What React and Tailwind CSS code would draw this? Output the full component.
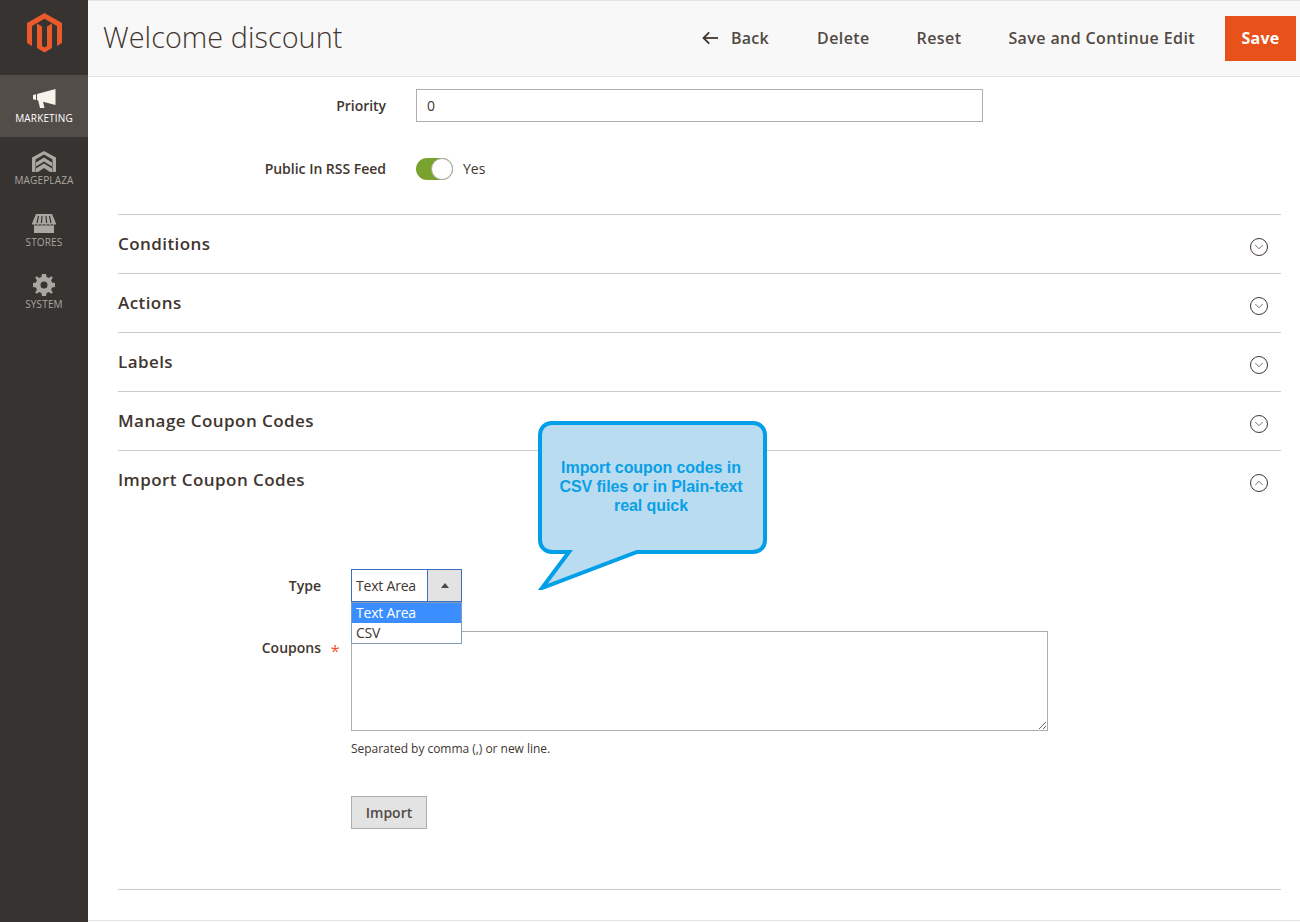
import React from 'react';
import { ChevronDown, ChevronUp } from 'lucide-react';

const LogoIcon = () => (
    <svg width="35" height="40" viewBox="0 0 35 40" fill="#eb5a2a">
        <path d="M17.5 0L35 10V30L30 33V13L17.5 5.8L5 13V33L0 30V10Z" />
        <path d="M10 10.5L15 13.4V33L17.5 34.5L20 33V13.4L25 10.5V35L17.5 39.5L10 35Z" />
    </svg>
);

const MegaphoneIcon = ({ color }) => (
    <svg width="23" height="20" viewBox="0 0 23 20" fill={color}>
        <path d="M0 6L3 5.2V11L0 10.2Z" />
        <path d="M4 5L22.5 0V16L10 12.8L11.5 19H7L5.2 11.6L4 11.2Z" />
    </svg>
);

const PlazaIcon = ({ color }) => (
    <svg width="24" height="21" viewBox="0 0 24 21" fill={color}>
        <path d="M12 0L24 6.5V21H20.5V8.5L12 3.5L3.5 8.5V21H0V6.5Z" />
        <path d="M12 6.5L20 11.5V15.5L12 10.5L4 15.5V11.5Z" />
        <path d="M12 12.5L20 17.5V21H18L12 17L6 21H4V17.5Z" />
    </svg>
);

const StoreIcon = ({ color }) => (
    <svg width="24" height="19" viewBox="0 0 24 19" fill={color}>
        <path d="M4 0H20L24 9.5C24 10.3 23 10.8 22 10.8C21 10.8 20 10.3 20 9.5C20 10.3 19 10.8 18 10.8C17 10.8 16 10.3 16 9.5C16 10.3 15 10.8 14 10.8C13 10.8 12 10.3 12 9.5C12 10.3 11 10.8 10 10.8C9 10.8 8 10.3 8 9.5C8 10.3 7 10.8 6 10.8C5 10.8 4 10.3 4 9.5C4 10.3 3 10.8 2 10.8C1 10.8 0 10.3 0 9.5Z" />
        <path d="M2 11.4H22V19H2Z" />
        <path d="M6.5 2L5 9M10 2L9.4 9M14 2L14.6 9M17.5 2L19 9" stroke="#373330" strokeWidth="1.2" fill="none" />
    </svg>
);

const GearIcon = ({ color }) => (
    <svg width="22" height="22" viewBox="0 0 22 22" fill={color}>
        <path fillRule="evenodd" d="M9 0H13L13.6 3L15.8 3.9L18.4 2.2L19.8 3.6L18.1 6.2L19 8.4L22 9V13L19 13.6L18.1 15.8L19.8 18.4L18.4 19.8L15.8 18.1L13.6 19L13 22H9L8.4 19L6.2 18.1L3.6 19.8L2.2 18.4L3.9 15.8L3 13.6L0 13V9L3 8.4L3.9 6.2L2.2 3.6L3.6 2.2L6.2 3.9L8.4 3ZM11 7.5A3.5 3.5 0 1 0 11 14.5A3.5 3.5 0 1 0 11 7.5Z" />
    </svg>
);

const BackArrow = () => (
    <svg width="16" height="14" viewBox="0 0 16 14" fill="none" stroke="#41362f" strokeWidth="1.8" className="mr-[13px]">
        <path d="M1.5 7H16" />
        <path d="M7.2 1.3L1.5 7L7.2 12.7" />
    </svg>
);

const navItems = [
    { label: 'Marketing', icon: MegaphoneIcon, active: true },
    { label: 'Mageplaza', icon: PlazaIcon },
    { label: 'Stores', icon: StoreIcon },
    { label: 'System', icon: GearIcon },
];

const sections = ['Conditions', 'Actions', 'Labels', 'Manage Coupon Codes'];

const SectionRow = ({ title, open }) => (
    <div className="h-[59px] border-t border-[#cccccc] flex items-center justify-between">
        <h2 className="text-[17px] font-semibold tracking-[0.43px] text-[#41362f] -mt-[1px]">{title}</h2>
        <span className="w-[18px] h-[18px] mr-[13px] mt-[5px] rounded-full border border-[#41362f] flex items-center justify-center text-[#41362f]">
            {open ? <ChevronUp size={14} strokeWidth={1.2} /> : <ChevronDown size={14} strokeWidth={1.2} />}
        </span>
    </div>
);

export default function App() {
    return (
        <div className="flex w-[1300px] h-[922px] overflow-hidden bg-white text-[#41362f] font-['Open_Sans',sans-serif]">
            <aside className="w-[88px] shrink-0 bg-[#373330]">
                <div className="h-[75px] flex justify-center pt-[13px]">
                    <LogoIcon />
                </div>
                {navItems.map(({ label, icon: Icon, active }) => (
                    <div key={label} className={`h-[62px] flex flex-col items-center pt-[13px] ${active ? 'bg-[#524d49] text-white' : 'text-[#aaa6a0]'}`}>
                        <div className="h-[22px] flex items-center">
                            <Icon color={active ? '#f7f3eb' : '#aaa6a0'} />
                        </div>
                        <span className="text-[10px] leading-[14px] uppercase mt-[1px] tracking-[0.15px]">{label}</span>
                    </div>
                ))}
            </aside>

            <div className="flex-1 min-w-0">
                <header className="h-[77px] bg-[#f8f8f8] border-t border-b border-[#e3e3e3] flex items-center pl-[15px] pr-[4px]">
                    <h1 className="text-[28.8px] font-light tracking-[0.05px] text-[#41362f] flex-1 -mt-[4px]">Welcome discount</h1>
                    <button className="flex items-center text-[16px] font-semibold tracking-[0.3px] text-[#514943] mr-[48px] -mt-[2px]">
                        <BackArrow />
                        Back
                    </button>
                    <button className="text-[16px] font-semibold tracking-[0.4px] text-[#514943] mr-[47px] -mt-[2px]">Delete</button>
                    <button className="text-[16px] font-semibold tracking-[0.4px] text-[#514943] mr-[47px] -mt-[2px]">Reset</button>
                    <button className="text-[16px] font-semibold tracking-[0.4px] text-[#514943] mr-[30px] -mt-[2px]">Save and Continue Edit</button>
                    <button className="w-[71px] h-[45px] bg-[#e85119] text-white text-[16px] font-bold tracking-[0.3px] pb-[2px]">Save</button>
                </header>

                <main className="relative pl-[30px] pr-[19px]">
                    <div className="flex items-center pt-[12px]">
                        <label className="w-[268px] text-right text-[14px] font-semibold tracking-[-0.05px] text-[#41362f]">Priority</label>
                        <input readOnly value="0" className="ml-[30px] w-[567px] h-[33px] border border-[#adadad] px-[10px] text-[14px] text-[#41362f] outline-none" />
                    </div>
                    <div className="flex items-center mt-[36px]">
                        <label className="w-[268px] text-right text-[14px] font-semibold tracking-[-0.02px] text-[#41362f] -mt-[2px]">Public In RSS Feed</label>
                        <span className="relative ml-[30px] w-[37px] h-[22px] rounded-full bg-[#79a22e]">
                            <span className="absolute right-0 top-0 w-[22px] h-[22px] rounded-full bg-white border border-[#adadad]" />
                        </span>
                        <span className="ml-[10px] text-[14px] text-[#41362f] -mt-[2px]">Yes</span>
                    </div>

                    <div className="mt-[34px]">
                        {sections.map((title) => (
                            <SectionRow key={title} title={title} />
                        ))}
                        <SectionRow title="Import Coupon Codes" open />
                    </div>

                    <div className="pt-[60px] h-[381px] border-b border-[#cccccc]">
                        <div className="flex items-center">
                            <label className="w-[203px] text-right text-[14px] font-semibold text-[#41362f]">Type</label>
                            <div className="relative ml-[30px] w-[111px] h-[33px] border border-[#3d6fc0] flex">
                                <span className="flex-1 flex items-center pl-[4px] text-[14px] tracking-[-0.2px] text-[#41362f]">Text Area</span>
                                <span className="w-[34px] bg-[#e3e3e3] border-l border-[#3d6fc0] flex items-center justify-center">
                                    <span className="w-0 h-0 border-x-[4px] border-x-transparent border-b-[5px] border-b-[#514943]" />
                                </span>
                                <div className="absolute z-10 left-[-1px] top-[32px] w-[111px] bg-white border border-[#7f9db9] text-[14px] leading-[20px] tracking-[-0.2px] text-[#41362f]">
                                    <div className="pl-[4px] bg-[#3b8eff] text-white">Text Area</div>
                                    <div className="pl-[4px]">CSV</div>
                                </div>
                            </div>
                        </div>
                        <div className="flex mt-[29px]">
                            <label className="w-[203px] text-right text-[14px] font-semibold text-[#41362f] pt-[6px] relative">
                                Coupons
                                <span className="absolute -right-[18.5px] top-[8px] text-[16px] text-[#f0532b] font-normal">*</span>
                            </label>
                            <div className="ml-[30px]">
                                <textarea readOnly className="block w-[697px] h-[100px] border border-[#adadad] outline-none" />
                                <p className="mt-[10px] text-[12px] leading-[16px] tracking-[-0.03px] text-[#41362f]">Separated by comma (,) or new line.</p>
                                <button className="mt-[39px] w-[76px] h-[33px] bg-[#e3e3e3] border border-[#adadad] text-[14px] font-semibold text-[#514943]">Import</button>
                            </div>
                        </div>
                    </div>
                    <div className="mt-[30px] border-t border-[#e3e3e3] -ml-[30px] -mr-[19px]" />

                    <div className="absolute left-[450px] top-[344px] w-[229px] h-[169px]">
                        <svg width="229" height="169" viewBox="0 0 229 169" className="absolute left-0 top-0">
                            <path
                                d="M14 2H215C222 2 227 7 227 14V119C227 126 222 131 215 131H99L4 167L31 131H14C7 131 2 126 2 119V14C2 7 7 2 14 2Z"
                                fill="#b9dcf0"
                                stroke="#009fe8"
                                strokeWidth="4"
                                strokeLinejoin="miter"
                            />
                        </svg>
                        <p className="absolute left-[16px] top-[37px] w-[194px] text-center text-[16px] leading-[19px] font-bold tracking-[-0.07px] text-[#0a9fe6] font-['Liberation_Sans',sans-serif]">
                            Import coupon codes in CSV files or in Plain-text real quick
                        </p>
                    </div>
                </main>
            </div>
        </div>
    );
}
